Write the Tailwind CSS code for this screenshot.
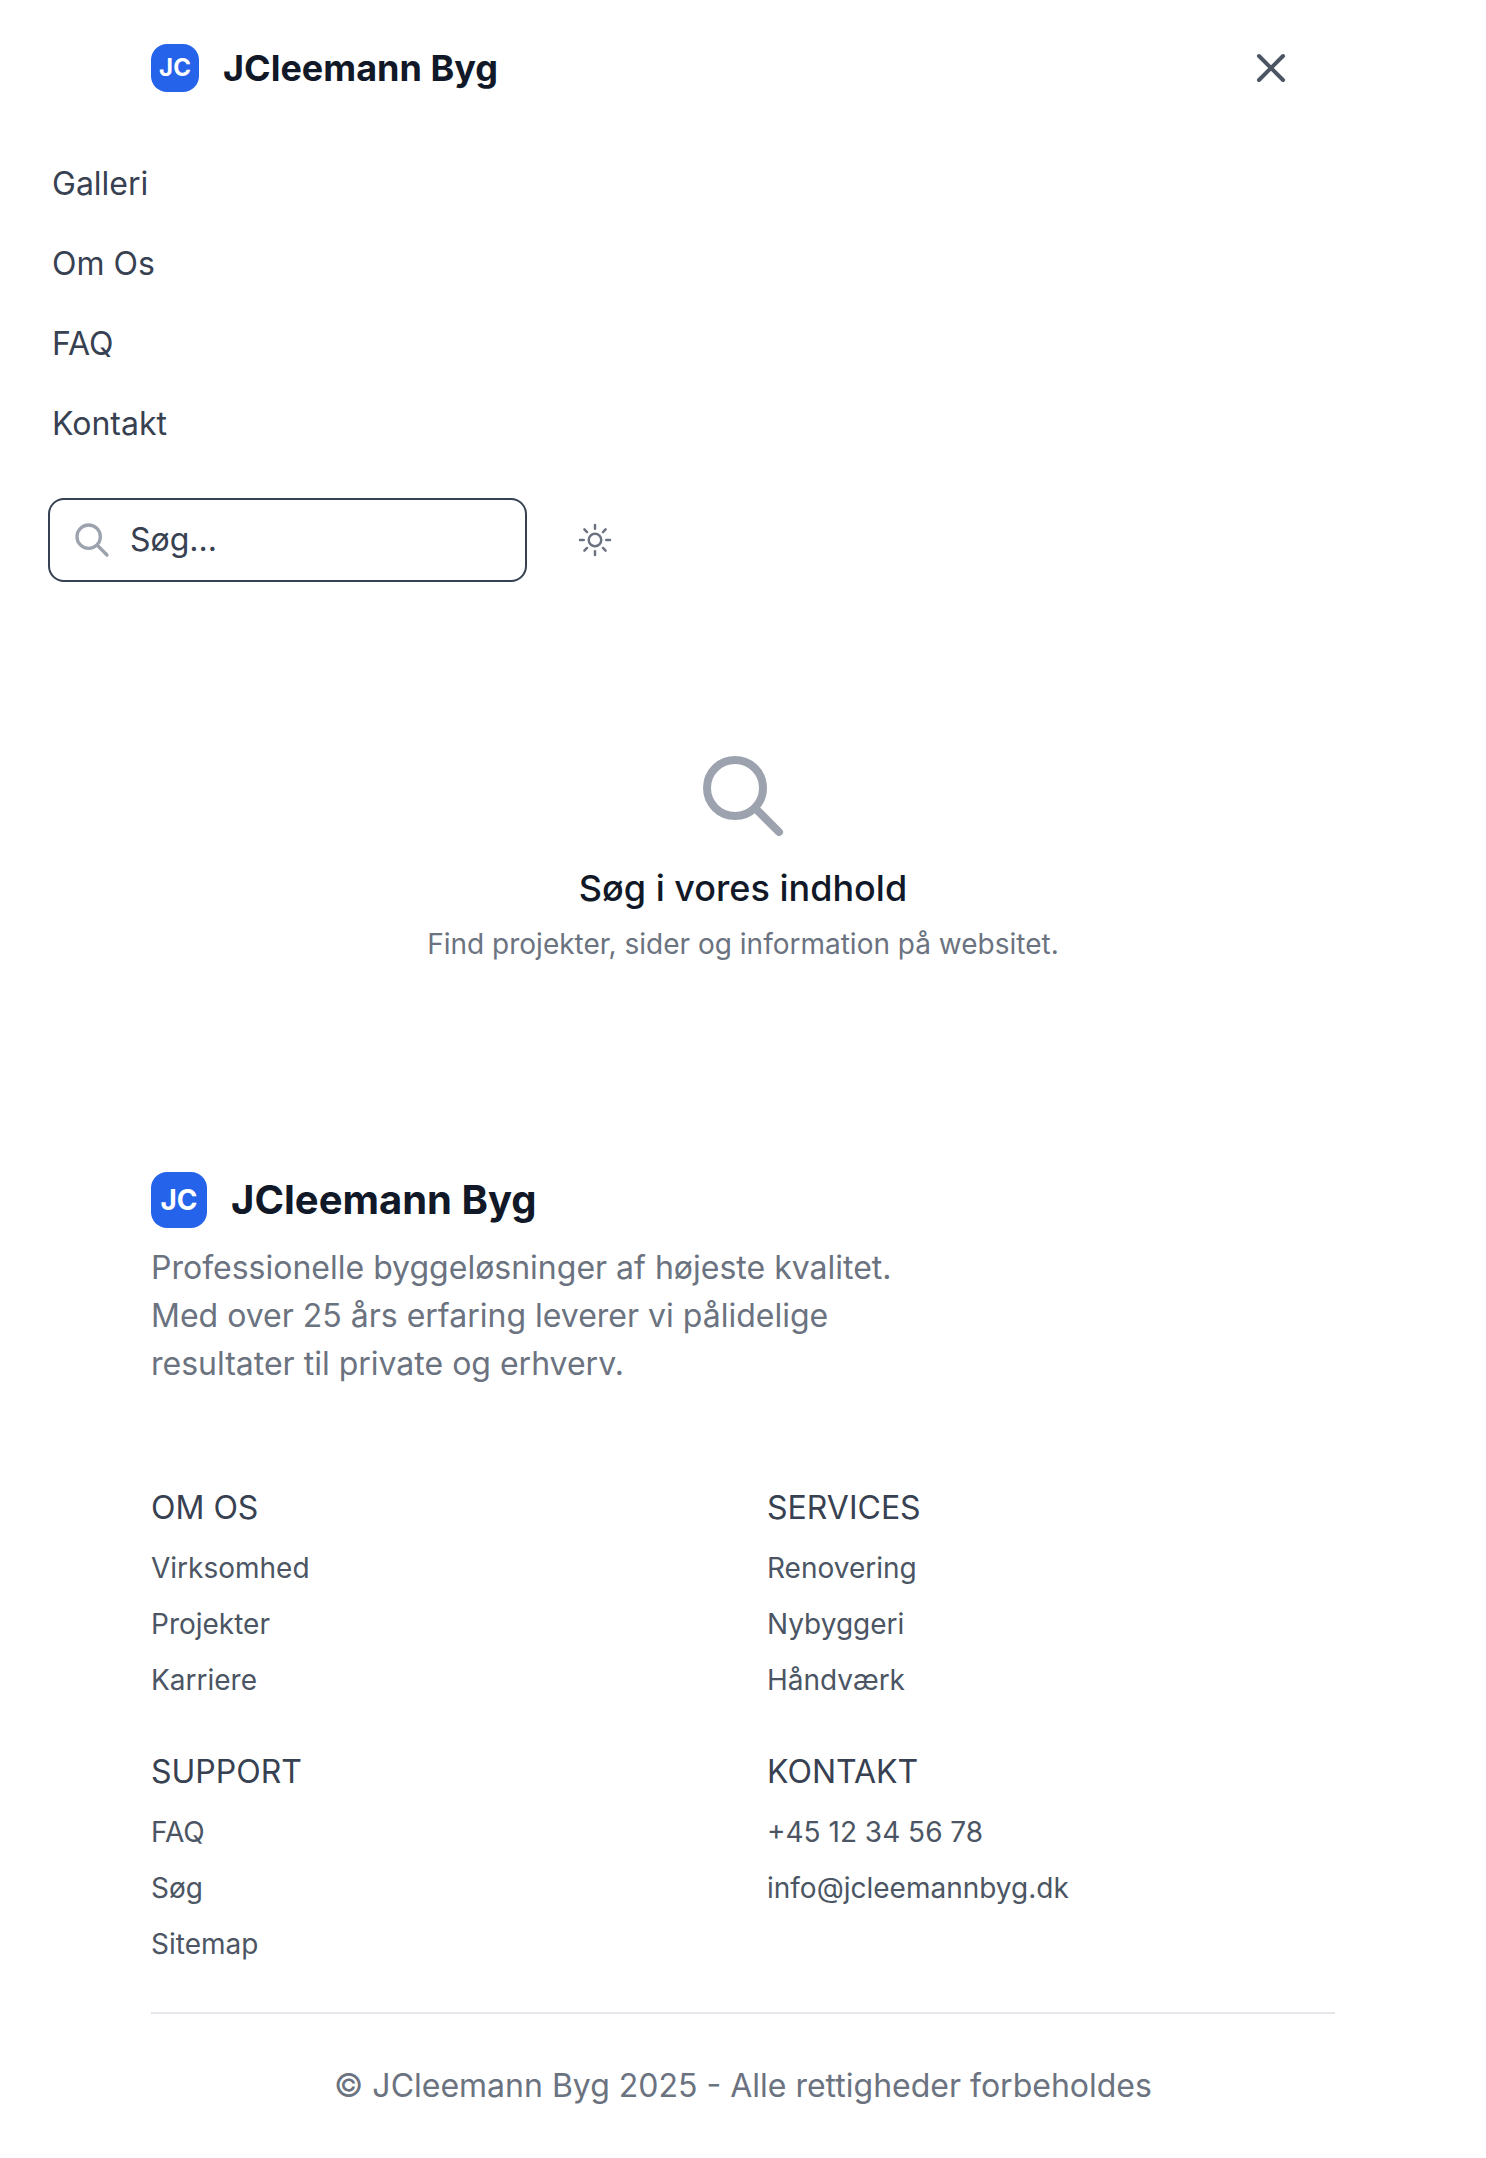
<!DOCTYPE html>
<html lang="da">
<head>
<meta charset="utf-8">
<title>Søg - JCleemann Byg</title>
<script src="https://cdn.jsdelivr.net/npm/@tailwindcss/browser@4"></script>
</head>
<body class="bg-white font-['Inter',sans-serif] text-[32px] leading-[48px] text-[#374151] antialiased">
<header>
  <div class="flex h-[136px] items-center justify-between pl-[151px] pr-[191px]">
    <a class="flex items-center gap-6">
      <span class="flex size-12 items-center justify-center rounded-2xl bg-[#2563eb] text-2xl font-bold text-white">JC</span>
      <span class="text-4xl font-bold text-[#111827]">JCleemann Byg</span>
    </a>
    <button aria-label="Luk menu" class="text-[#4b5563]">
      <svg class="size-12" viewBox="0 0 24 24" fill="none" stroke="currentColor" stroke-width="2" stroke-linecap="round" stroke-linejoin="round"><path d="M6 18L18 6M6 6l12 12"/></svg>
    </button>
  </div>
  <nav class="flex flex-col pt-2">
    <a class="px-[52px] py-4">Galleri</a>
    <a class="px-[52px] py-4">Om Os</a>
    <a class="px-[52px] py-4">FAQ</a>
    <a class="px-[52px] py-4">Kontakt</a>
  </nav>
  <div class="mt-[34px] flex items-center gap-12 pl-12">
    <div class="flex h-[84px] w-[479px] items-center gap-[18px] rounded-2xl border-2 border-[#374151] pl-[22px]">
      <svg class="size-10 text-[#9ca3af]" viewBox="0 0 24 24" fill="none" stroke="currentColor" stroke-width="2" stroke-linecap="round" stroke-linejoin="round"><path d="M21 21l-6-6m2-5a7 7 0 11-14 0 7 7 0 0114 0z"/></svg>
      <span>Søg...</span>
    </div>
    <button aria-label="Skift tema" class="text-[#6b7280]">
      <svg class="size-10" viewBox="0 0 24 24" fill="none" stroke="currentColor" stroke-width="1.5" stroke-linecap="round" stroke-linejoin="round"><path d="M12 3v2.25m6.364.386l-1.591 1.591M21 12h-2.25m-.386 6.364l-1.591-1.591M12 18.75V21m-4.773-4.227l-1.591 1.591M5.25 12H3m4.227-4.773L5.636 5.636M15.75 12a3.75 3.75 0 11-7.5 0 3.75 3.75 0 017.5 0z"/></svg>
    </button>
  </div>
</header>
<main class="flex flex-col items-center pt-[166px]">
  <svg class="size-24 text-[#9ca3af]" viewBox="0 0 24 24" fill="none" stroke="currentColor" stroke-width="2" stroke-linecap="round" stroke-linejoin="round"><path d="M21 21l-6-6m2-5a7 7 0 11-14 0 7 7 0 0114 0z"/></svg>
  <h1 class="mt-4 text-4xl leading-[56px] font-medium text-[#111827]">Søg i vores indhold</h1>
  <p class="mt-2 text-[28px] leading-10 text-[#6b7280]">Find projekter, sider og information på websitet.</p>
</main>
<footer class="px-[151px] pt-[208px] pb-12">
  <div class="flex items-center gap-6">
    <span class="flex size-14 items-center justify-center rounded-2xl bg-[#2563eb] text-[28px] font-bold text-white">JC</span>
    <span class="text-[40px] leading-[56px] font-bold text-[#111827]">JCleemann Byg</span>
  </div>
  <p class="mt-4 w-[768px] text-[#6b7280]">Professionelle byggeløsninger af højeste kvalitet. Med over 25 års erfaring leverer vi pålidelige resultater til private og erhverv.</p>
  <div class="mt-24 grid grid-cols-2 gap-12">
    <section>
      <h3>OM OS</h3>
      <ul class="mt-4 space-y-4 text-[28px] leading-10 text-[#4b5563]"><li>Virksomhed</li><li>Projekter</li><li>Karriere</li></ul>
    </section>
    <section>
      <h3>SERVICES</h3>
      <ul class="mt-4 space-y-4 text-[28px] leading-10 text-[#4b5563]"><li>Renovering</li><li>Nybyggeri</li><li>Håndværk</li></ul>
    </section>
    <section>
      <h3>SUPPORT</h3>
      <ul class="mt-4 space-y-4 text-[28px] leading-10 text-[#4b5563]"><li>FAQ</li><li>Søg</li><li>Sitemap</li></ul>
    </section>
    <section>
      <h3>KONTAKT</h3>
      <ul class="mt-4 space-y-4 text-[28px] leading-10 text-[#4b5563]"><li>+45 12 34 56 78</li><li>info@jcleemannbyg.dk</li></ul>
    </section>
  </div>
  <div class="mt-12 border-t-2 border-[#e5e7eb] pt-12 text-center text-[#6b7280]">© JCleemann Byg 2025 - Alle rettigheder forbeholdes</div>
</footer>
</body>
</html>
